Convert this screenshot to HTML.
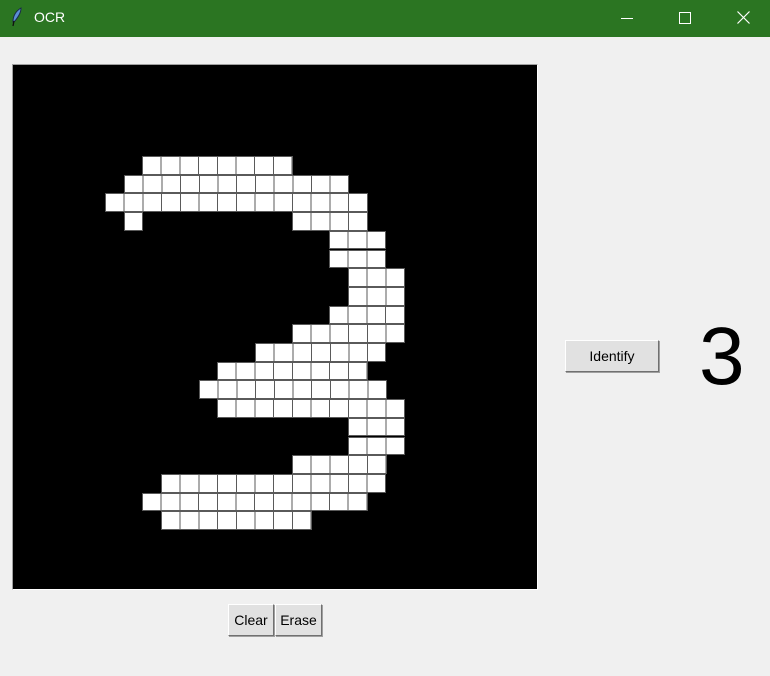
<!DOCTYPE html>
<html><head><style>
body{margin:0;width:770px;height:676px;background:#f0f0f0;position:relative;overflow:hidden;font-family:"Liberation Sans",sans-serif}
.tb{position:absolute;left:0;top:0;width:770px;height:37px;background:#2b7522;color:#fff}
.cv{position:absolute;left:12px;top:64px;width:524px;height:524px;background:#000;border-top:1px solid #a0a0a0;border-left:1px solid #a0a0a0;border-right:1px solid #fff;border-bottom:1px solid #fff}
.r{position:absolute;height:18.7px;box-sizing:border-box;border:1px solid #5a5a5a;background:repeating-linear-gradient(to right,#fff 0 17.7px,#5a5a5a 17.7px 18.7px)}
.btn{position:absolute;background:#e1e1e1;border:1px solid;border-color:#fff #707070 #707070 #fff;box-shadow:1px 1px 0 #a0a0a0;font-size:14px;text-align:center;box-sizing:border-box;color:#000}
</style></head><body>
<div class="tb">
<svg style="position:absolute;left:10px;top:7px" width="14" height="20" viewBox="0 0 14 20"><path d="M11 1 C6 4 3 9 3 15 L5 14 C8 10 11 6 11 1Z" fill="#5b8fd6" stroke="#1a2a4a" stroke-width="1"/><path d="M4 14 L3 19" stroke="#111" stroke-width="1.3"/></svg>
<span style="position:absolute;left:34px;top:9px;font-size:14px">OCR</span>
<div style="position:absolute;left:621px;top:18px;width:12px;height:1px;background:#fff"></div>
<div style="position:absolute;left:679px;top:12px;width:10px;height:10px;border:1px solid #fff"></div>
<svg style="position:absolute;left:737px;top:11px" width="13" height="13"><path d="M0.5 0.5L12.5 12.5M12.5 0.5L0.5 12.5" stroke="#fff" stroke-width="1.2"/></svg>
</div>
<div class="cv"></div>
<div id="g"></div>
<script>
var rows=[[2,9],[1,12],[0,13],[1,1,10,13],[12,14],[12,14],[13,15],[13,15],[12,15],[10,15],[8,14],[6,13],[5,14],[6,15],[13,15],[13,15],[10,14],[3,14],[2,13],[3,10]];
var h='';rows.forEach(function(r,i){for(var k=0;k<r.length;k+=2){var a=r[k],b=r[k+1];h+='<div class="r" style="left:'+(105+18.7*a).toFixed(1)+'px;top:'+(156+18.7*i).toFixed(1)+'px;width:'+(18.7*(b-a+1)+1).toFixed(1)+'px"></div>';}});
document.getElementById('g').innerHTML=h;
</script>
<div class="btn" style="left:565px;top:340px;width:94px;height:32px;line-height:30px">Identify</div>
<div style="position:absolute;left:699px;top:312px;font-size:82px;line-height:90px">3</div>
<div class="btn" style="left:228px;top:604px;width:46px;height:32px;line-height:30px">Clear</div>
<div class="btn" style="left:275px;top:604px;width:47px;height:32px;line-height:30px">Erase</div>
</body></html>
